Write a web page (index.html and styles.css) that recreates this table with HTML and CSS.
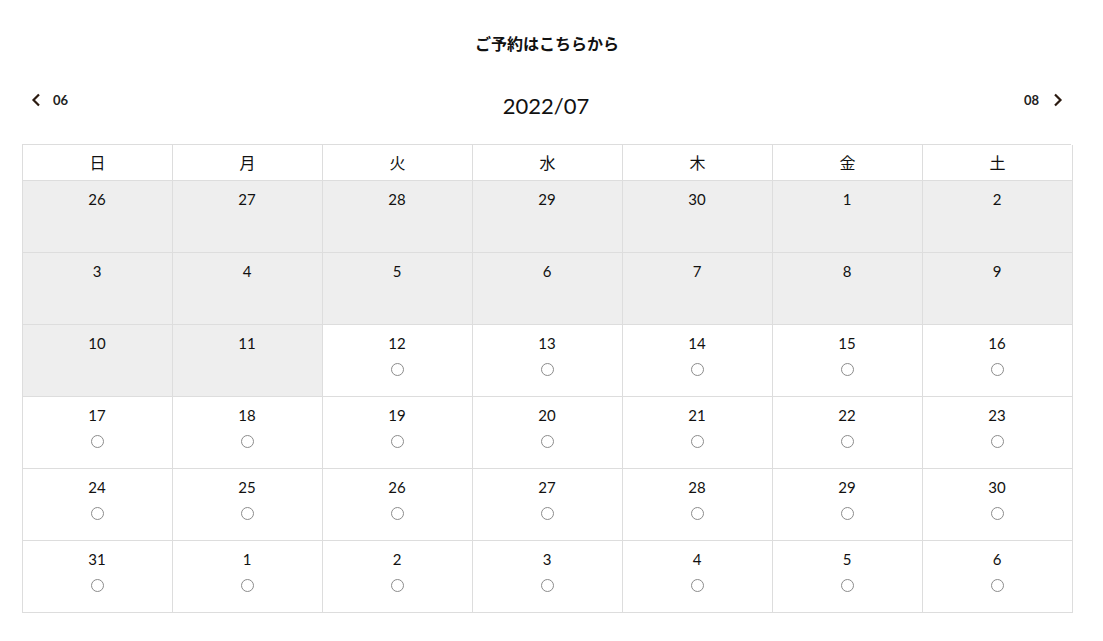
FILE: index.html
```html
<!DOCTYPE html>
<html lang="ja">
<head>
<meta charset="utf-8">
<link rel="stylesheet" href="styles.css">
</head>
<body>
<div class="wrap">
  <h2 class="title">ご予約はこちらから</h2>
  <div class="nav">
    <a class="nav-link prev"><svg width="10" height="14" viewBox="0 0 10 14"><path d="M8 1.5 L2.5 7 L8 12.5" fill="none" stroke="#2b1a10" stroke-width="2.2"/></svg><span>06</span></a>
    <div class="month">2022/07</div>
    <a class="nav-link next"><span>08</span><svg width="10" height="14" viewBox="0 0 10 14"><path d="M2 1.5 L7.5 7 L2 12.5" fill="none" stroke="#2b1a10" stroke-width="2.2"/></svg></a>
  </div>
  <div class="cal">
    <div class="hd">日</div><div class="hd">月</div><div class="hd">火</div><div class="hd">水</div><div class="hd">木</div><div class="hd">金</div><div class="hd">土</div>
    <div class="c off">26</div><div class="c off">27</div><div class="c off">28</div><div class="c off">29</div><div class="c off">30</div><div class="c off">1</div><div class="c off">2</div>
    <div class="c off">3</div><div class="c off">4</div><div class="c off">5</div><div class="c off">6</div><div class="c off">7</div><div class="c off">8</div><div class="c off">9</div>
    <div class="c off">10</div><div class="c off">11</div><div class="c">12<i class="o"></i></div><div class="c">13<i class="o"></i></div><div class="c">14<i class="o"></i></div><div class="c">15<i class="o"></i></div><div class="c">16<i class="o"></i></div>
    <div class="c">17<i class="o"></i></div><div class="c">18<i class="o"></i></div><div class="c">19<i class="o"></i></div><div class="c">20<i class="o"></i></div><div class="c">21<i class="o"></i></div><div class="c">22<i class="o"></i></div><div class="c">23<i class="o"></i></div>
    <div class="c">24<i class="o"></i></div><div class="c">25<i class="o"></i></div><div class="c">26<i class="o"></i></div><div class="c">27<i class="o"></i></div><div class="c">28<i class="o"></i></div><div class="c">29<i class="o"></i></div><div class="c">30<i class="o"></i></div>
    <div class="c">31<i class="o"></i></div><div class="c">1<i class="o"></i></div><div class="c">2<i class="o"></i></div><div class="c">3<i class="o"></i></div><div class="c">4<i class="o"></i></div><div class="c">5<i class="o"></i></div><div class="c">6<i class="o"></i></div>
  </div>
</div>
</body>
</html>
```
FILE: styles.css
```css
html, body { margin: 0; padding: 0; background: #fff; }
body { font-family: Lato, "Noto Sans CJK JP", sans-serif; color: #111; }
.wrap { width: 1050px; padding: 0 0 0 22px; }
.title {
  margin: 0; padding-top: 32px; height: 22px;
  text-align: center; font-size: 16px; font-weight: 700; line-height: 22px;
  font-family: "Noto Sans CJK JP", sans-serif; color: #111;
}
.nav {
  display: flex; align-items: flex-start; justify-content: space-between;
  margin-top: 36px; height: 54px;
}
.nav-link { display: flex; align-items: center; gap: 12px; font-size: 13px; font-weight: 700; color: #222; height: 20px; }
.prev { padding-left: 9px; }
.next { padding-right: 9px; gap: 14px; }
.next span { margin-right: 0; }
.month { font-size: 22px; line-height: 26px; padding-top: 3px; color: #111; }
.cal {
  display: grid; grid-template-columns: repeat(7, 150px);
  grid-template-rows: 36px repeat(6, 72px);
  border-top: 1px solid #ddd; border-left: 1px solid #ddd;
  width: 1049px; box-sizing: border-box;
}
.cal > div { border-right: 1px solid #ddd; border-bottom: 1px solid #ddd; text-align: center; }
.hd { font-size: 16px; line-height: 35px; font-family: "Noto Sans CJK JP", sans-serif; font-weight: 400; }
.c { display: flex; flex-direction: column; align-items: center; font-size: 15px; line-height: 18px; padding-top: 9px; box-sizing: border-box; padding-right: 1px; }
.off { background: #eeeeee; }
.o { display: block; width: 11px; height: 11px; border: 1.5px solid #8c8c8c; border-radius: 50%; margin-top: 11px; }
```
